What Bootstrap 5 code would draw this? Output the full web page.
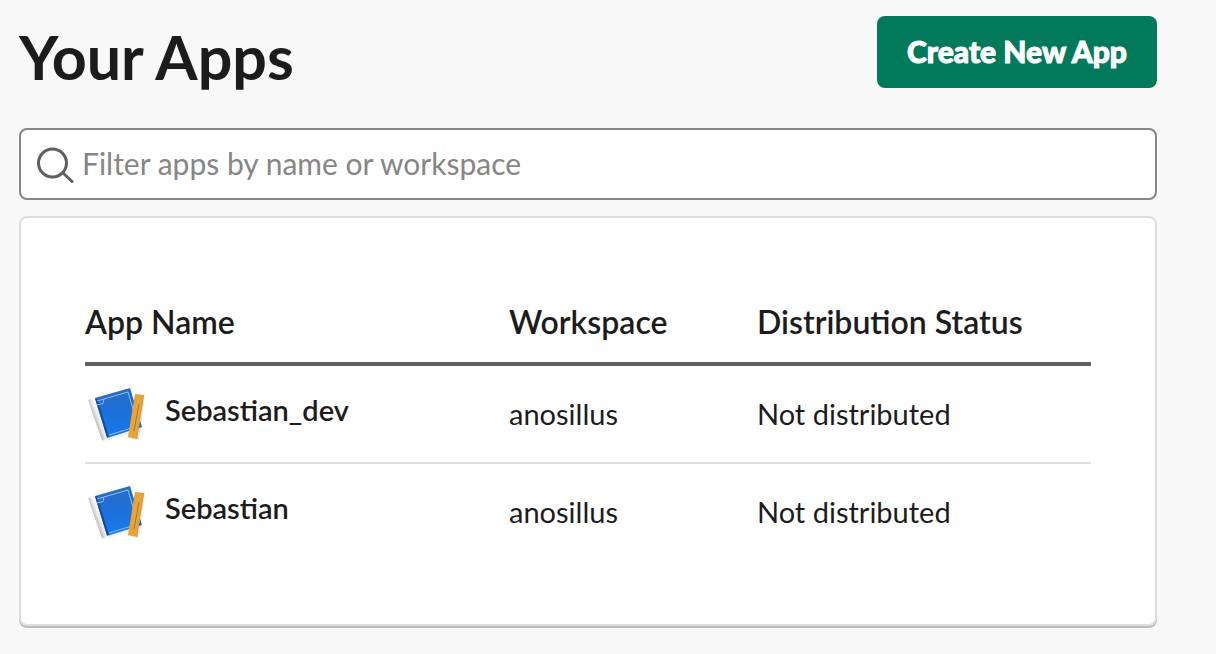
<!DOCTYPE html>
<html lang="en">
<head>
<meta charset="utf-8">
<meta name="viewport" content="width=device-width, initial-scale=1">
<title>Your Apps</title>
<link href="https://cdn.jsdelivr.net/npm/bootstrap@5.3.0/dist/css/bootstrap.min.css" rel="stylesheet">
<style>
body { background: #f8f8f8; color: #1d1c1d; font-family: Lato, "Open Sans", sans-serif; font-size: 29px; }
.page { padding: 16px 59px 24px 19px; }
.page-title { font-size: 61px; line-height: 82px; font-weight: 700; }
.btn-create { background: #007a5a; color: #fff; font-size: 30px; line-height: 40px; font-weight: 900; -webkit-text-stroke: 1px #fff; padding: 15px 30px 17px; border: 0; border-radius: 8px; }
.btn-create:hover { background: #148567; color: #fff; }
.filter { height: 72px; margin-top: 30px; background: #fff; border: 2px solid #868686; border-radius: 8px; padding: 0 16px; }
.filter .form-control { font-size: 30px; line-height: 40px; color: #1d1c1d; padding: 0 7px 2px; }
.filter .form-control::placeholder { color: #868686; }
.apps-card { margin-top: 16px; border: 2px solid #ddd; border-radius: 8px; padding: 64px 64px 62px; box-shadow: 0 2px 0 #bbb; }
.apps { table-layout: fixed; color: #1d1c1d; border-collapse: separate; border-spacing: 0; }
.apps > thead > tr > th { font-size: 32px; line-height: 40px; font-weight: 600; padding: 20px 0; border-bottom: 4px solid #616061; }
.apps > tbody > tr > td { height: 98px; line-height: 40px; padding: 0; border-bottom: 2px solid #ddd; }
.apps > tbody > tr:last-child > td { border-bottom-color: transparent; }
.col-app { width: 424px; }
.col-space { width: 248px; }
.app-link { color: #1d1c1d; font-weight: 600; gap: 20px; }
.app-link span { padding-bottom: 8px; }
</style>
</head>
<body>
<svg width="0" height="0" class="position-absolute" aria-hidden="true">
  <defs>
    <linearGradient id="cover" x1="0" y1="0" x2="0" y2="1"><stop offset="0" stop-color="#2a6cc6"/><stop offset=".5" stop-color="#1d70db"/><stop offset="1" stop-color="#167af0"/></linearGradient>
    <linearGradient id="spine" gradientUnits="userSpaceOnUse" x1="10" y1="37" x2="18" y2="34"><stop offset="0" stop-color="#bcbcbf"/><stop offset=".5" stop-color="#efeff1"/><stop offset="1" stop-color="#fff"/></linearGradient>
  </defs>
  <symbol id="book" viewBox="0 0 60 60">
    <path d="M4 20 18 58 57 46 54 30z" fill="#000" opacity=".05"/>
    <path d="M3 16 10 14 23 54 17 56.500z" fill="url(#spine)"/>
    <path d="M10 14 45 4 57 43 22 54z" fill="url(#cover)"/>
    <path d="M11 14.500 23 53" stroke="#164b94" stroke-width="2"/>
    <path d="M12 17 43 8 53 42 24 51M12 21 18 19.500 19 15" fill="none" stroke="#8fc0f7" stroke-width="1"/>
    <path d="M50 10 60 11 54 56 43 54z" fill="#000" opacity=".1"/>
    <path d="M50 10 59 11 52 55 43 53z" fill="#e6a53a"/>
    <path d="M58.500 11 51.500 55" stroke="#d99c34"/>
    <path d="M54 20 49 47" stroke="#ad7622" stroke-width="1"/>
  </symbol>
</svg>
<main class="page">
  <header class="d-flex justify-content-between align-items-start">
    <h1 class="page-title mb-0">Your Apps</h1>
    <button type="button" class="btn btn-create">Create New App</button>
  </header>
  <div class="filter d-flex align-items-center">
    <svg width="38" height="38" viewBox="0 0 38 38" fill="none" stroke="#616061" stroke-width="3" stroke-linecap="round" class="flex-shrink-0" aria-hidden="true"><circle cx="15.500" cy="18" r="14"/><path d="M26 28 35 36.500"/></svg>
    <input type="text" class="form-control border-0 bg-transparent shadow-none" placeholder="Filter apps by name or workspace" aria-label="Filter apps by name or workspace">
  </div>
  <section class="card apps-card">
    <table class="table apps mb-0 align-middle">
      <colgroup><col class="col-app"><col class="col-space"><col></colgroup>
      <thead><tr><th scope="col">App Name</th><th scope="col">Workspace</th><th scope="col">Distribution Status</th></tr></thead>
      <tbody>
        <tr>
          <td><a href="#" class="app-link d-flex align-items-center text-decoration-none"><svg width="60" height="60" aria-hidden="true"><use href="#book"/></svg><span>Sebastian_dev</span></a></td>
          <td>anosillus</td><td>Not distributed</td>
        </tr>
        <tr>
          <td><a href="#" class="app-link d-flex align-items-center text-decoration-none"><svg width="60" height="60" aria-hidden="true"><use href="#book"/></svg><span>Sebastian</span></a></td>
          <td>anosillus</td><td>Not distributed</td>
        </tr>
      </tbody>
    </table>
  </section>
</main>
<script src="https://cdn.jsdelivr.net/npm/bootstrap@5.3.0/dist/js/bootstrap.bundle.min.js"></script>
</body>
</html>
